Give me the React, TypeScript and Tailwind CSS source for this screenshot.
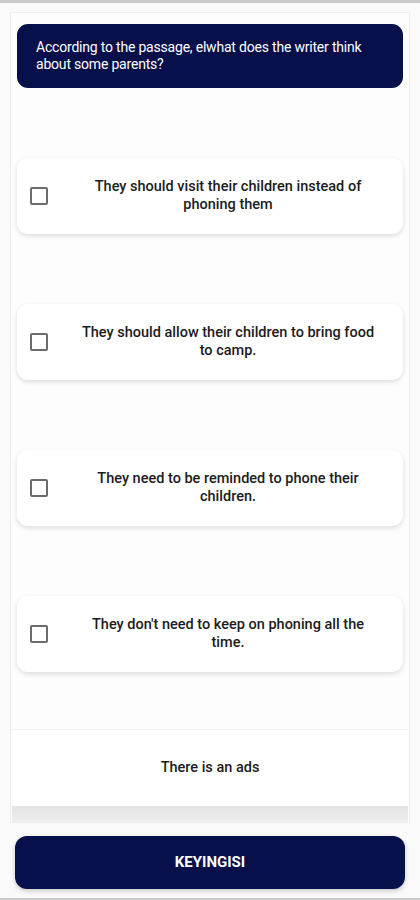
import React from "react";

const options = [
  "They should visit their children instead of phoning them",
  "They should allow their children to bring food to camp.",
  "They need to be reminded to phone their children.",
  "They don't need to keep on phoning all the time.",
];

export default function App() {
  return (
    <div
      className="w-[420px] h-[900px] bg-[#fafafa] border-t-[3px] border-b-[2px] border-[#c9c9c9] flex flex-col overflow-hidden"
      style={{ fontFamily: "Roboto, 'Liberation Sans', sans-serif" }}
    >
      <div className="mx-[10px] mt-[9px] bg-[#fdfdfd] border border-[#eeeeee] flex flex-col">
        <div className="mx-[6px] mt-[11px] h-[64px] rounded-[11px] bg-[#07104a] px-[19px] py-[15px] text-white text-[14px] leading-[17px] tracking-[-0.2px]">
          According to the passage, elwhat does the writer think about some parents?
        </div>
        <div className="flex flex-col gap-[70px] mt-[70px] mx-[6px]">
          {options.map((o) => (
            <div
              key={o}
              className="h-[76px] bg-white rounded-[11px] shadow-[0_2px_5px_rgba(0,0,0,0.13)] flex items-center pl-[13px]"
            >
              <div className="w-[18px] h-[18px] border-2 border-[#6b6b6b] rounded-[2px] shrink-0" />
              <div className="ml-[31px] w-[298px] text-center text-[14.5px] leading-[18px] font-medium text-[#1c1c1c]">
                {o}
              </div>
            </div>
          ))}
        </div>
        <div className="mt-[16px] h-[42px] border-b border-[#f3f3f3]" />
        <div className="mx-[1px] h-[76px] bg-white flex items-center justify-center text-[14.5px] font-medium text-[#1c1c1c]">
          There is an ads
        </div>
        <div className="mx-[1px] h-[16px] bg-gradient-to-b from-[#e3e3e3] to-[#eeeeee]" />
      </div>
      <div className="mx-[15px] mt-[13px] h-[53px] rounded-[12px] bg-[#07104a] shadow-[0_2px_5px_rgba(0,0,0,0.2)] flex items-center justify-center text-white text-[15px] font-bold">
        KEYINGISI
      </div>
    </div>
  );
}
